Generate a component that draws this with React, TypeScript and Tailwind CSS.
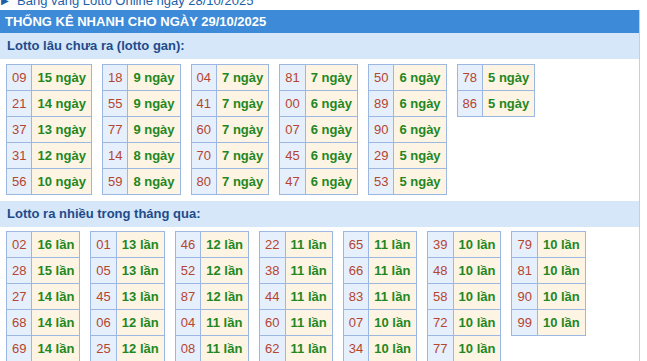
import React from "react";

type Item = [string, string];

const gan: Item[][] = [
  [["09", "15"], ["21", "14"], ["37", "13"], ["31", "12"], ["56", "10"]],
  [["18", "9"], ["55", "9"], ["77", "9"], ["14", "8"], ["59", "8"]],
  [["04", "7"], ["41", "7"], ["60", "7"], ["70", "7"], ["80", "7"]],
  [["81", "7"], ["00", "6"], ["07", "6"], ["45", "6"], ["47", "6"]],
  [["50", "6"], ["89", "6"], ["90", "6"], ["29", "5"], ["53", "5"]],
  [["78", "5"], ["86", "5"]],
];

const nhieu: Item[][] = [
  [["02", "16"], ["28", "15"], ["27", "14"], ["68", "14"], ["69", "14"]],
  [["01", "13"], ["05", "13"], ["45", "13"], ["06", "12"], ["25", "12"]],
  [["46", "12"], ["52", "12"], ["87", "12"], ["04", "11"], ["08", "11"]],
  [["22", "11"], ["38", "11"], ["44", "11"], ["60", "11"], ["62", "11"]],
  [["65", "11"], ["66", "11"], ["83", "11"], ["07", "10"], ["34", "10"]],
  [["39", "10"], ["48", "10"], ["58", "10"], ["72", "10"], ["77", "10"]],
  [["79", "10"], ["81", "10"], ["90", "10"], ["99", "10"]],
];

function LotoTable({ rows, unit }: { rows: Item[]; unit: string }) {
  return (
    <table className="border-collapse border border-[#9db7e3] text-[13px] leading-[15px]">
      <tbody>
        {rows.map(([so, dem]) => (
          <tr key={so}>
            <td className="border border-[#9db7e3] bg-[#e6effc] px-[5px] py-[5px] text-[#b4452f]">{so}</td>
            <td className="border border-[#9db7e3] bg-[#fdf4e3] px-[5px] py-[5px] font-bold text-[#23871f] whitespace-nowrap">
              {dem} {unit}
            </td>
          </tr>
        ))}
      </tbody>
    </table>
  );
}

export default function App() {
  return (
    <div className="w-[647px] h-[361px] overflow-hidden bg-white font-['Liberation_Sans',Arial,sans-serif]">
      <div className="h-[10px] overflow-hidden">
        <div className="-mt-[7px] flex items-center text-[13px] leading-[15px] text-[#1d5fa8]">
          <span className="w-[17px] pl-[1px] text-[10px]">▶</span>
          <span>Bảng vàng Lotto Online ngày 28/10/2025</span>
        </div>
      </div>
      <div className="w-[640px] border-r border-[#c5d0dc]">
        <div className="h-[23px] bg-[#3d8ad8] pl-[5px] text-[13px] font-bold leading-[23px] text-white">
          THỐNG KÊ NHANH CHO NGÀY 29/10/2025
        </div>
        <div className="h-[26px] bg-[#d5e7f9] pl-[7px] text-[13px] font-bold leading-[26px] text-[#1f4b8a]">
          Lotto lâu chưa ra (lotto gan):
        </div>
        <div className="flex items-start gap-[10px] pl-[6px] pt-[5px] pb-[6px]">
          {gan.map((t, i) => (
            <LotoTable key={i} rows={t} unit="ngày" />
          ))}
        </div>
        <div className="h-[26px] bg-[#d5e7f9] pl-[7px] text-[13px] font-bold leading-[26px] text-[#1f4b8a]">
          Lotto ra nhiều trong tháng qua:
        </div>
        <div className="flex items-start gap-[10px] pl-[6px] pt-[4px]">
          {nhieu.map((t, i) => (
            <LotoTable key={i} rows={t} unit="lần" />
          ))}
        </div>
      </div>
    </div>
  );
}
